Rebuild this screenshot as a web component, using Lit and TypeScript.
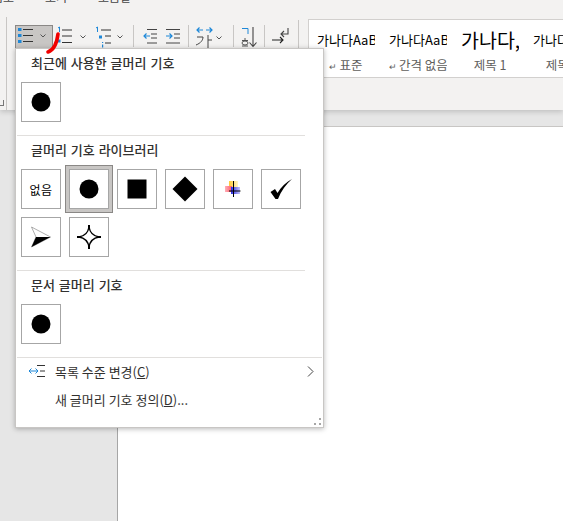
import { LitElement, html, css, svg } from 'lit';
import { customElement } from 'lit/decorators.js';

const chevron = svg`<path d="M0.5 0.5 L3 3 L5.5 0.5" fill="none" stroke="#555" stroke-width="1"/>`;
const dot = html`<svg width="20" height="20" viewBox="0 0 20 20"><circle cx="10" cy="10" r="9.5" fill="#000"/></svg>`;

const bulletCells = [
  html`<span class="none">없음</span>`,
  dot,
  html`<svg width="20" height="20" viewBox="0 0 20 20"><rect width="19" height="19" x="0.5" y="0.5"/></svg>`,
  html`<svg width="26" height="26" viewBox="0 0 26 26"><path d="M13 0.5 L25.5 13 L13 25.5 L0.5 13 Z"/></svg>`,
  html`<svg width="16" height="16" viewBox="0 0 16 16">
    <defs>
      <linearGradient id="ye"><stop offset="0" stop-color="#ffc933"/><stop offset="1" stop-color="#fff6c8"/></linearGradient>
      <linearGradient id="re"><stop offset="0" stop-color="#ffb0b8"/><stop offset="1" stop-color="#ff5a68"/></linearGradient>
      <linearGradient id="bl"><stop offset="0" stop-color="#2a2ae8"/><stop offset="1" stop-color="#c4c4fa"/></linearGradient>
    </defs>
    <rect x="4" y="0" width="9" height="6" fill="url(#ye)"/>
    <rect x="0" y="5" width="7" height="6" fill="url(#re)"/>
    <rect x="6" y="6" width="9" height="7" fill="url(#bl)"/>
    <path d="M8.5 -1 V16 M4 10 H15.5" stroke="#000" stroke-width="1" fill="none"/></svg>`,
  html`<svg width="22" height="21" viewBox="0 0 22 21"><path d="M0.5 13 L5 10 L7.5 14 C11 8 16 3.5 22 0 C16 5.5 11 12 8 20 L5.5 20 Z"/></svg>`,
  html`<svg width="20" height="22" viewBox="0 0 20 22"><path d="M0.5 1 L19.5 11 L0.5 21 L5 11 Z" fill="#fff" stroke="#777" stroke-width="0.6"/><path d="M0.5 21 L5 11 L19.5 11 Z"/></svg>`,
  html`<svg width="24" height="24" viewBox="0 0 24 24"><path d="M12 2 C13 8 16 11 22 12 C16 13 13 16 12 22 C11 16 8 13 2 12 C8 11 11 8 12 2 Z" fill="#fff" stroke="#000" stroke-width="1.4"/><path d="M12 0 V3.5 M12 20.5 V24 M0 12 H3.5 M20.5 12 H24" stroke="#000" stroke-width="2"/></svg>`,
];

@customElement('app-root')
export class AppRoot extends LitElement {
  static styles = css`
    :host {
      display: block;
      position: relative;
      width: 563px;
      height: 521px;
      overflow: hidden;
      background: #e6e6e6;
      font-family: 'Noto Sans CJK KR', 'Noto Sans', sans-serif;
      color: #323130;
    }

    .ribbon {
      height: 110px;
      background: #f3f2f1;
      box-shadow: 0 2px 5px rgba(0, 0, 0, 0.16);
      position: relative;
      display: flex;
      flex-direction: column;
    }

    .tabs {
      height: 3px;
      overflow: hidden;
      display: flex;
      align-items: flex-end;
      font-size: 12px;
      line-height: 12px;
      color: #444;
    }

    .tabs span {
      flex: none;
    }

    .tabs .t1 { width: 45px; margin-left: -8px; margin-right: 8px; }
    .tabs .t2 { width: 53px; }

    .body {
      flex: 1;
      display: flex;
      padding-top: 14px;
    }

    .left-rule {
      width: 1px;
      height: 93px;
      margin-left: 6px;
      margin-right: 8px;
      background: #c8c6c4;
    }

    .tools {
      display: flex;
      align-items: flex-start;
      padding-top: 8px;
      height: 24px;
      width: 283px;
    }

    .tool {
      flex: none;
      height: 24px;
      display: block;
    }

    .tool.on {
      background: #c8c6c4;
      box-shadow: inset 0 0 0 1px #8a8886;
    }

    .sep {
      flex: none;
      width: 1px;
      height: 22px;
      background: #c8c6c4;
    }

    .right-rule {
      flex: none;
      width: 1px;
      height: 62px;
      margin-top: 3px;
      background: #c8c6c4;
    }

    .gallery {
      flex: none;
      width: 255px;
      height: 59px;
      margin: 2px 0 0 9px;
      box-sizing: border-box;
      background: #fff;
      border: 1px solid #d2d0ce;
      border-right: none;
      display: flex;
      padding-left: 8px;
      gap: 14px;
    }

    .style {
      flex: none;
      width: 58px;
      overflow: hidden;
      white-space: nowrap;
    }

    .style .sample {
      height: 35px;
      display: flex;
      align-items: flex-end;
      font-size: 13px;
      line-height: 30px;
      color: #000;
    }

    .style .sample.big {
      font-size: 19.5px;
    }

    .style .label {
      font-size: 12.5px;
      line-height: 20px;
      color: #605e5c;
      text-align: center;
    }

    .style .mark {
      font-size: 9px;
      margin-right: 2px;
    }

    .doc {
      position: absolute;
      left: 117px;
      top: 126px;
      right: 0;
      bottom: 0;
      background: #fff;
      border-top: 1px solid #c8c6c4;
      border-left: 1px solid #a6a6a6;
    }

    .launcher {
      position: absolute;
      left: 0;
      top: 100px;
      width: 3px;
      height: 5px;
      border-right: 1px solid #777;
      border-bottom: 1px solid #777;
    }

    .menu {
      position: absolute;
      left: 15px;
      top: 48px;
      width: 309px;
      height: 380px;
      box-sizing: border-box;
      background: #fff;
      border: 1px solid #c8c6c4;
      box-shadow: 0 1px 5px rgba(0, 0, 0, 0.28);
      display: flex;
      flex-direction: column;
    }

    h3 {
      margin: 0;
      height: 28px;
      padding-left: 15px;
      font-size: 13px;
      line-height: 27px;
      font-weight: 500;
      color: #323130;
      word-spacing: 1px;
    }

    .cells {
      display: grid;
      grid-template-columns: repeat(6, 40px);
      grid-auto-rows: 40px;
      gap: 8px;
      padding-left: 5px;
      margin-top: 5px;
    }

    .cell {
      box-sizing: border-box;
      border: 1px solid #a6a6a6;
      display: flex;
      align-items: center;
      justify-content: center;
      position: relative;
      background: #fff;
    }

    .cell.picked::before {
      content: '';
      position: absolute;
      inset: -5px;
      border: 4px solid #c8c6c4;
      outline: 1px solid #8a8886;
      outline-offset: -1px;
    }

    .none {
      font-size: 12px;
      color: #000;
      letter-spacing: 0.4px;
    }

    .rule {
      height: 1px;
      background: #e1dfdd;
      margin-top: 13px;
    }

    .rule.short {
      margin-left: 1px;
      margin-right: 18px;
    }

    .rule.long {
      margin-left: 1px;
      margin-right: 1px;
    }

    .item {
      height: 28px;
      box-sizing: border-box;
      padding: 0 0 2px 12px;
      display: flex;
      align-items: center;
      font-size: 13px;
      color: #323130;
    }

    .item .ico {
      flex: none;
      width: 27px;
      display: flex;
    }

    .item .txt {
      flex: 1;
    }

    .item u {
      text-underline-offset: 1px;
    }

    .item .arrow {
      margin-right: 9px;
      display: block;
    }

    .grip {
      position: absolute;
      right: 2px;
      bottom: 2px;
      display: block;
    }

    .ink {
      position: absolute;
      left: 42px;
      top: 30px;
      pointer-events: none;
    }
  `;

  private _tools() {
    return html`
      <svg class="tool on" style="width:38px" viewBox="0 0 38 24">
        <path d="M3 3h3.5v3H3z M3 9h3.5v3H3z M3 15h3.5v3H3z" fill="#1e88d8"/>
        <path d="M8 4.5 H18 M8 10.5 H18 M8 16.5 H18" stroke="#333" stroke-width="1"/>
        <g transform="translate(25,9)">${chevron}</g>
      </svg>
      <svg class="tool" style="width:39px;margin-left:3px" viewBox="0 0 39 24">
        <path d="M2 3 L3.5 2 V7" fill="none" stroke="#1e88d8" stroke-width="1"/>
        <path d="M1 14.5h3.5v3H1z" fill="#1e88d8"/>
        <path d="M6 5 H16 M6 11 H16 M6 17.5 H16" stroke="#333" stroke-width="1"/>
        <g transform="translate(24,10)">${chevron}</g>
      </svg>
      <svg class="tool" style="width:38px" viewBox="0 0 38 24">
        <path d="M1 3 L2.5 2 V7" fill="none" stroke="#1e88d8" stroke-width="1"/>
        <path d="M4 10.5h3v3h-3z M7 17h1.2v1h-1.2z M7 19.5h1.2v3h-1.2z" fill="#1e88d8"/>
        <path d="M6 5 H16 M10 11 H16 M10 18 H16" stroke="#333" stroke-width="1"/>
        <g transform="translate(22,10)">${chevron}</g>
      </svg>
      <div class="sep" style="margin-right:7px"></div>
      <svg class="tool" style="width:18px" viewBox="0 0 18 24">
        <path d="M6 4.5 H16 M10 9 H16 M10 13 H16 M6 18 H16" stroke="#444" stroke-width="1"/>
        <path d="M9 11 H3 M5.5 8.5 L3 11 L5.5 13.5" fill="none" stroke="#1e88d8" stroke-width="1.2"/>
      </svg>
      <svg class="tool" style="width:18px;margin-left:5px" viewBox="0 0 18 24">
        <path d="M2 4.5 H16 M10 9 H16 M10 13 H16 M2 18 H16" stroke="#444" stroke-width="1"/>
        <path d="M2 11 H8 M5.5 8.5 L8 11 L5.5 13.5" fill="none" stroke="#1e88d8" stroke-width="1.2"/>
      </svg>
      <div class="sep" style="margin:0 5px 0 6px"></div>
      <svg class="tool" style="width:39px" viewBox="0 0 39 24">
        <path d="M9 5 H3 M5.5 2.5 L3 5 L5.5 7.5 M12 5 H18 M15.5 2.5 L18 5 L15.5 7.5" fill="none" stroke="#1e88d8" stroke-width="1.2"/>
        <path d="M3 12 H9 C9 15 7 18 2 20 M14 10 V23 M14 15 H18" fill="none" stroke="#444" stroke-width="1"/>
        <g transform="translate(22,11)">${chevron}</g>
      </svg>
      <div class="sep" style="margin-right:6px"></div>
      <svg class="tool" style="width:24px" viewBox="0 0 24 24">
        <path d="M2 3.5 H8 V9" fill="none" stroke="#1e88d8" stroke-width="1"/>
        <path d="M5 13 V15 M2 15.5 H8 M2 21 H8 M2 18 a3 2 0 1 0 6 0 a3 2 0 1 0 -6 0" fill="none" stroke="#444" stroke-width="0.9"/>
        <path d="M13 2 V21 M9.5 17.5 L13 21.5 L16.5 17.5" fill="none" stroke="#444" stroke-width="1.1"/>
      </svg>
      <div class="sep" style="margin-right:6px"></div>
      <svg class="tool" style="width:26px" viewBox="0 0 26 24">
        <path d="M17 3 V9 H10 M13 6 L10 9 L13 12" fill="none" stroke="#444" stroke-width="1.1"/>
        <path d="M1 15 H12 M9 12 L12 15 L9 18" fill="none" stroke="#222" stroke-width="1.1"/>
      </svg>
    `;
  }

  private _style(sample: string, label: string, mark = true, big = false) {
    return html`
      <div class="style">
        <div class="sample ${big ? 'big' : ''}">${sample}</div>
        <div class="label">${mark ? html`<span class="mark">↵</span>` : ''}${label}</div>
      </div>
    `;
  }

  render() {
    return html`
      <div class="ribbon">
        <div class="tabs">
          <span class="t1">검토</span><span class="t2">보기</span><span>도움말</span>
        </div>
        <div class="body">
          <div class="left-rule"></div>
          <div class="tools">${this._tools()}</div>
          <div class="right-rule"></div>
          <div class="gallery">
            ${this._style('가나다AaBbCc', '표준')}
            ${this._style('가나다AaBbCc', '간격 없음')}
            ${this._style('가나다,', '제목 1', false, true)}
            ${this._style('가나다AaBbCc', '제목 2', false)}
          </div>
        </div>
        <div class="launcher"></div>
      </div>

      <div class="doc"></div>

      <div class="menu">
        <h3>최근에 사용한 글머리 기호</h3>
        <div class="cells">
          <div class="cell">${dot}</div>
        </div>
        <div class="rule short"></div>

        <h3>글머리 기호 라이브러리</h3>
        <div class="cells">
          ${bulletCells.map((c, i) => html`<div class="cell ${i === 1 ? 'picked' : ''}">${c}</div>`)}
        </div>
        <div class="rule short"></div>

        <h3>문서 글머리 기호</h3>
        <div class="cells">
          <div class="cell">${dot}</div>
        </div>
        <div class="rule long"></div>

        <div class="item">
          <span class="ico">
            <svg width="20" height="14" viewBox="0 0 20 14">
              <path d="M1 7 H10 M3.5 4.5 L1 7 L3.5 9.5 M7.5 4.5 L10 7 L7.5 9.5" fill="none" stroke="#1e88d8" stroke-width="1"/>
              <path d="M9 1.5 H17 M12 7 H17 M9 12.5 H17" stroke="#333" stroke-width="1"/>
            </svg>
          </span>
          <span class="txt">목록 수준 변경(<u>C</u>)</span>
          <svg class="arrow" width="7" height="11" viewBox="0 0 7 11"><path d="M1 0.5 L6 5.5 L1 10.5" fill="none" stroke="#444" stroke-width="1"/></svg>
        </div>
        <div class="item">
          <span class="ico"></span>
          <span class="txt">새 글머리 기호 정의(<u>D</u>)...</span>
        </div>
        <svg class="grip" width="7" height="7" viewBox="0 0 7 7"><path d="M5 0h2v2h-2z M0 5h2v2h-2z M5 5h2v2h-2z" fill="#a6a6a6"/></svg>
      </div>

      <svg class="ink" width="20" height="26" viewBox="0 0 20 26">
        <path d="M16 4 C15 12 12 20 6 22" fill="none" stroke="#f00000" stroke-width="3.6" stroke-linecap="round"/>
      </svg>
    `;
  }
}
